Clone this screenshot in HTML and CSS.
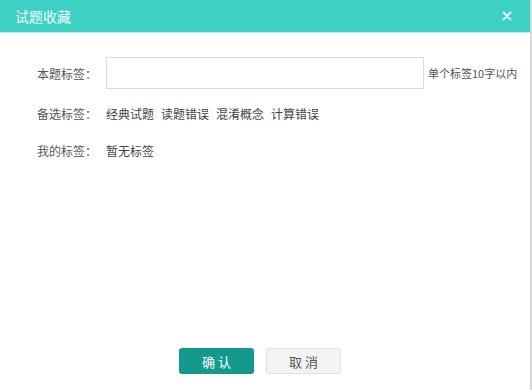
FILE: index.html
```html
<!DOCTYPE html>
<html>
<head>
<meta charset="utf-8">
<link rel="stylesheet" href="styles.css">
</head>
<body>
<div class="dialog">
  <div class="header">
    <span class="title">试题收藏</span>
    <span class="close">
      <svg width="10" height="10" viewBox="0 0 10 10"><path d="M1.5 1.5L8.5 8.5M8.5 1.5L1.5 8.5" stroke="#e8fbf9" stroke-width="2" stroke-linecap="round"/></svg>
    </span>
  </div>
  <div class="body">
    <div class="row row-input">
      <span class="label">本题标签：</span>
      <input class="tag-input" type="text">
      <span class="hint">单个标签10字以内</span>
    </div>
    <div class="row">
      <span class="label">备选标签：</span>
      <span class="tags"><span>经典试题</span><span>读题错误</span><span>混淆概念</span><span>计算错误</span></span>
    </div>
    <div class="row">
      <span class="label">我的标签：</span>
      <span class="tags"><span>暂无标签</span></span>
    </div>
  </div>
  <div class="footer">
    <button class="btn btn-ok">确 认</button>
    <button class="btn btn-cancel">取 消</button>
  </div>
</div>
</body>
</html>
```
FILE: styles.css
```css
html, body { margin: 0; padding: 0; background: #fff; }
body {
  font-family: "Microsoft YaHei", "Noto Sans CJK SC", sans-serif;
  font-size: 12px;
  color: #333;
  width: 532px;
  height: 390px;
  overflow: hidden;
}
.dialog {
  width: 530px;
  height: 390px;
  border-right: 2px solid #d9d9d9;
  display: flex;
  flex-direction: column;
  box-sizing: content-box;
}
.header {
  height: 32px;
  background: #3dd1c4;
  display: flex;
  align-items: center;
  justify-content: space-between;
  padding: 0 18px 0 15px;
  border-bottom: 1px solid #bfeee9;
  flex: none;
}
.title { color: #f2fffd; font-size: 14px; }
.close { display: flex; align-items: center; }
.body {
  flex: 1;
  padding: 24px 0 0 37px;
  display: flex;
  flex-direction: column;
}
.row {
  display: flex;
  align-items: center;
  height: 20px;
  margin-bottom: 17px;
}
.row-input { height: 32px; margin-bottom: 14px; }
.label { width: 69px; flex: none; color: #555; }
.tag-input {
  width: 318px;
  height: 32px;
  box-sizing: border-box;
  border: 1px solid #dcdcdc;
  outline: none;
  margin: 0;
  padding: 0 6px;
}
.hint { margin-left: 4px; color: #555; font-size: 11px; }
.tags { display: flex; gap: 7px; color: #444; }
.footer {
  flex: none;
  display: flex;
  justify-content: center;
  gap: 12px;
  padding-bottom: 16px;
  padding-right: 10px;
}
.btn {
  width: 75px;
  height: 26px;
  border-radius: 3px;
  font-family: inherit;
  font-size: 13px;
  padding: 0;
  cursor: pointer;
}
.btn-ok { background: #139a8c; color: #fff; border: none; }
.btn-cancel { background: #f3f3f3; color: #555; border: 1px solid #e2e2e2; }
```
